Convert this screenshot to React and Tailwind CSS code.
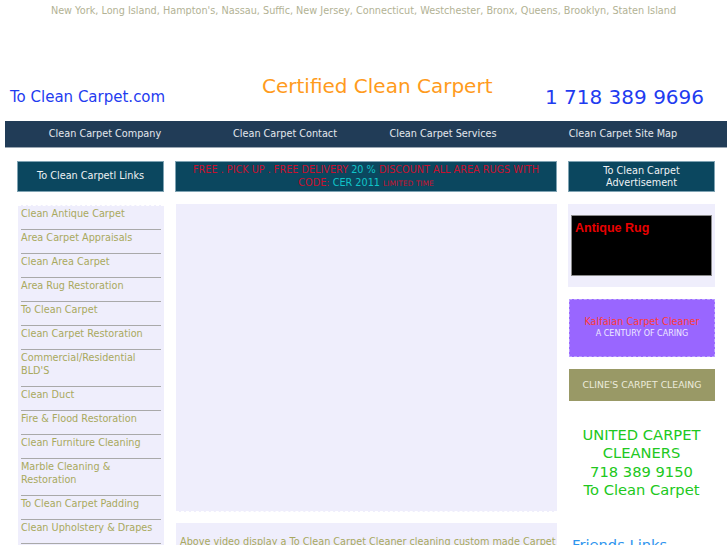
import React from 'react';

const links = [
  'Clean Antique Carpet',
  'Area Carpet Appraisals',
  'Clean Area Carpet',
  'Area Rug Restoration',
  'To Clean Carpet',
  'Clean Carpet Restoration',
  "Commercial/Residential BLD'S",
  'Clean Duct',
  'Fire & Flood Restoration',
  'Clean Furniture Cleaning',
  'Marble Cleaning & Restoration',
  'To Clean Carpet Padding',
  'Clean Upholstery & Drapes',
  'Oriental Rug Cleaning',
];

const nav = [
  { label: 'Clean Carpet Company', w: 'w-[200px]' },
  { label: 'Clean Carpet Contact', w: 'w-[160px]' },
  { label: 'Clean Carpet Services', w: 'w-[156px]' },
  { label: 'Clean Carpet Site Map', w: 'w-[204px]' },
];

const App = () => {
  return (
    <div className="w-[727px] h-[545px] overflow-hidden bg-white font-['DejaVu_Sans',sans-serif]">
      {/* areas served */}
      <div className="h-[22px] pt-[4px] text-center text-[9.7px] leading-[14px] text-[#b2b294]">
        New York, Long Island, Hampton's, Nassau, Suffic, New Jersey, Connecticut, Westchester, Bronx, Queens, Brooklyn, Staten Island
      </div>

      {/* header */}
      <div className="h-[99px] flex">
        <div className="w-[262px] pl-[10px] pt-[65px] text-[15px] leading-[20px] text-[#1f3cf0] whitespace-nowrap">
          To Clean Carpet.com
        </div>
        <div className="w-[273px] pt-[52px] text-[20px] leading-[24px] text-[#ff9b1c] whitespace-nowrap">
          Certified Clean Carpert
        </div>
        <div className="pl-[10px] pt-[63px] text-[20px] leading-[24px] text-[#1f3cf0] whitespace-nowrap">
          1 718 389 9696
        </div>
      </div>

      {/* nav */}
      <div className="ml-[5px] h-[27px] flex items-center bg-[#213c57] border-b border-[#9aa6b2]">
        {nav.map((n) => (
          <div key={n.label} className={`${n.w} text-center text-[9.7px] text-[#e4e8ee] whitespace-nowrap`}>
            {n.label}
          </div>
        ))}
      </div>

      {/* main */}
      <div className="mt-[13px] ml-[17px] flex gap-[11px]">
        {/* left */}
        <div className="w-[147px] shrink-0">
          <div className="h-[31px] flex items-center justify-center bg-[#0b475f] border border-[#7fa3b3] text-[9.7px] text-[#eef2f4]">
            To Clean Carpetl Links
          </div>
          <div className="mt-[13px] ml-[1px] bg-[#efeefc] border-t border-dashed border-white pb-[4px]">
            {links.map((l) => (
              <div key={l} className="mx-[3px] pt-[1px] pb-[9px] border-b border-[#a9a9a9] text-[9.7px] leading-[13px] text-[#a9a95e]">
                {l}
              </div>
            ))}
          </div>
        </div>

        {/* middle */}
        <div className="w-[382px] shrink-0">
          <div className="h-[31px] flex flex-col items-center justify-center bg-[#0b475f] border border-[#7fa3b3] text-[9.7px] leading-[13px] text-[#c8102e] whitespace-nowrap">
            <div>
              FREE . PICK UP . FREE DELIVERY <span className="text-[#10c4c8]">20 %</span> DISCOUNT ALL AREA RUGS WITH
            </div>
            <div>
              CODE: <span className="text-[#10c4c8]">CER 2011</span> <span className="text-[7.5px]">LIMITED TIME</span>
            </div>
          </div>
          <div className="mt-[12px] ml-[1px] h-[308px] bg-[#efeefc] border-b border-dashed border-white"></div>
          <div className="mt-[11px] ml-[1px] h-[40px] bg-[#efeefc] pl-[4px] pt-[12px] text-[9.7px] leading-[13px] text-[#a9a95e] whitespace-nowrap overflow-hidden">
            Above video display a To Clean Carpet Cleaner cleaning custom made Carpet
          </div>
        </div>

        {/* right */}
        <div className="w-[147px] shrink-0">
          <div className="h-[31px] flex flex-col items-center justify-center bg-[#0b475f] border border-[#7fa3b3] text-[9.7px] leading-[12px] text-[#eef2f4] text-center">
            <div>To Clean Carpet</div>
            <div>Advertisement</div>
          </div>
          <div className="mt-[12px] h-[83px] bg-[#efeefc] pl-[3px] pr-[3px] pt-[11px]">
            <div className="h-[61px] bg-black border border-[#8a8a8a] pl-[3px] pt-[5px] font-['Liberation_Sans',sans-serif] font-bold text-[12.5px] leading-[15px] text-[#e80000]">
              Antique Rug
            </div>
          </div>
          <div className="mt-[12px] ml-[1px] h-[58px] bg-[#9966ff] border border-dashed border-[#b9a0ff] flex flex-col items-center justify-center">
            <div className="text-[9.7px] leading-[12px] text-[#ff3a3a]">Kalfaian Carpet Cleaner</div>
            <div className="text-[8px] leading-[12px] text-[#eeeaff]">A CENTURY OF CARING</div>
          </div>
          <div className="mt-[12px] ml-[1px] h-[32px] bg-[#999966] flex items-center justify-center text-[9.3px] text-[#ecebdc] whitespace-nowrap">
            CLINE'S CARPET CLEAING
          </div>
          <div className="mt-[25px] text-center text-[14.7px] leading-[18.3px] text-[#20c820]">
            <div>UNITED CARPET</div>
            <div>CLEANERS</div>
            <div>718 389 9150</div>
            <div>To Clean Carpet</div>
          </div>
          <div className="mt-[37px] pl-[4px] text-[14.7px] leading-[18px] text-[#2f95ee]">Friends Links</div>
        </div>
      </div>
    </div>
  );
};

export default App;
